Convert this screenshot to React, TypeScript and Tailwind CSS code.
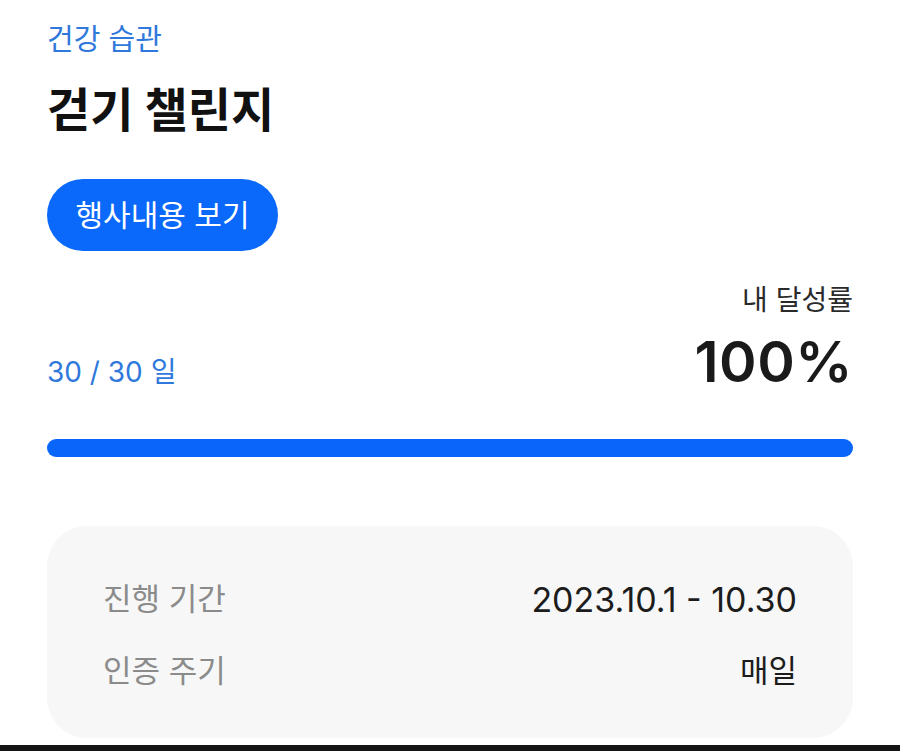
const font = { fontFamily: 'Inter, "Noto Sans CJK KR", sans-serif' };

function InfoRow({ label, value, valueClass }: { label: string; value: string; valueClass: string }) {
  return (
    <div className="flex items-center justify-between h-[72px]">
      <span className="text-[31px] text-[#8b8b8b]">{label}</span>
      <span className={`text-[#1c1c1c] ${valueClass}`}>{value}</span>
    </div>
  );
}

export default function App() {
  return (
    <div className="relative w-[900px] h-[751px] bg-white overflow-hidden" style={font}>
      <div className="flex flex-col px-[47px]">
        <p className="mt-5 h-10 leading-[40px] text-[29px] text-[#2f78dc]">건강 습관</p>
        <h1 className="mt-[22px] h-14 leading-[56px] text-[47px] font-bold text-[#111]">걷기 챌린지</h1>
        <button
          type="button"
          className="mt-[41px] h-[72px] w-[231px] rounded-full bg-[#0a68fb] text-white text-[30px] leading-none"
        >
          행사내용 보기
        </button>
        <p className="mt-[31px] h-9 leading-9 text-right text-[28px] text-[#2a2a2a]">내 달성률</p>
        <div className="flex items-end justify-between h-[76px]">
          <span className="text-[28px] leading-[40px] text-[#2f78dc] mb-[2px]">30 / 30 일</span>
          <span className="text-[57px] leading-[64px] font-semibold text-[#1a1a1a] tracking-[0.5px]">100%</span>
        </div>
        <div className="mt-[45px] h-[18px] rounded-full bg-[#0a66fa]" />
        <div className="mt-[69px] h-[212px] rounded-[40px] bg-[#f7f7f7] px-14 pt-[37px]">
          <InfoRow label="진행 기간" value="2023.10.1 - 10.30" valueClass="text-[34px]" />
          <InfoRow label="인증 주기" value="매일" valueClass="text-[31px]" />
        </div>
      </div>
      <div className="absolute bottom-0 left-0 right-0 h-[6px] bg-[#141414]" />
    </div>
  );
}
